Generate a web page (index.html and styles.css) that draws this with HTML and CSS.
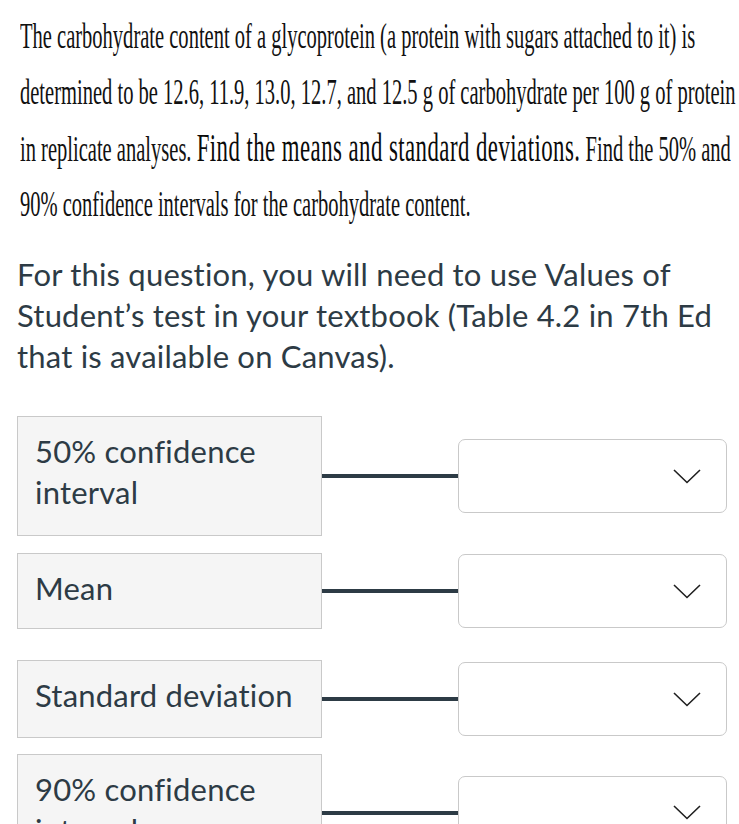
FILE: index.html
```html
<!DOCTYPE html>
<html>
<head>
<meta charset="utf-8">
<link rel="stylesheet" href="styles.css">
</head>
<body>
<div class="page">
  <div class="scan">
    <div class="sline"><span class="sq">The carbohydrate content of a glycoprotein (a protein with sugars attached to it) is</span></div>
    <div class="sline"><span class="sq">determined to be 12.6, 11.9, 13.0, 12.7, and 12.5 g of carbohydrate per 100 g of protein</span></div>
    <div class="sline"><span class="sq">in replicate analyses. <span class="big">Find the means and standard deviations.</span> Find the 50% and</span></div>
    <div class="sline"><span class="sq">90% confidence intervals for the carbohydrate content.</span></div>
  </div>
  <p class="note">For this question, you will need to use Values of Student’s test in your textbook (Table 4.2 in 7th Ed that is available on Canvas).</p>
  <div class="matches">
    <div class="row r1">
      <div class="label">50% confidence interval</div>
      <div class="wire"></div>
      <div class="select"><svg class="chev" viewBox="0 0 28 15" width="28" height="15"><polyline points="1,1 14,13.5 27,1" fill="none" stroke="#1f1f1f" stroke-width="1.6"/></svg></div>
    </div>
    <div class="row r2">
      <div class="label">Mean</div>
      <div class="wire"></div>
      <div class="select"><svg class="chev" viewBox="0 0 28 15" width="28" height="15"><polyline points="1,1 14,13.5 27,1" fill="none" stroke="#1f1f1f" stroke-width="1.6"/></svg></div>
    </div>
    <div class="row r3">
      <div class="label">Standard deviation</div>
      <div class="wire"></div>
      <div class="select"><svg class="chev" viewBox="0 0 28 15" width="28" height="15"><polyline points="1,1 14,13.5 27,1" fill="none" stroke="#1f1f1f" stroke-width="1.6"/></svg></div>
    </div>
    <div class="row r4">
      <div class="label">90% confidence interval</div>
      <div class="wire"></div>
      <div class="select"><svg class="chev" viewBox="0 0 28 15" width="28" height="15"><polyline points="1,1 14,13.5 27,1" fill="none" stroke="#1f1f1f" stroke-width="1.6"/></svg></div>
    </div>
  </div>
</div>
</body>
</html>
```
FILE: styles.css
```css
html, body {
  margin: 0;
  padding: 0;
  background: #ffffff;
  overflow: hidden;
}
.page {
  width: 739px;
  height: 824px;
  overflow: hidden;
}
.scan {
  padding: 8px 0 0 20px;
  height: 232px;
  box-sizing: border-box;
  font-family: "Liberation Serif", "Times New Roman", serif;
  color: #111111;
}
.sline {
  height: 56px;
  line-height: 56px;
  white-space: nowrap;
}
.sq {
  display: inline-block;
  font-size: 36px;
  transform-origin: 0 50%;
  transform: scaleX(0.57);
}
.sq .big {
  font-size: 40px;
  letter-spacing: 0.8px;
  color: #0a0a0a;
}
.note {
  margin: 22px 0 0 0;
  padding: 0 12px 0 17px;
  font-family: Lato, "Open Sans", sans-serif;
  font-size: 31px;
  letter-spacing: 0.2px;
  line-height: 41px;
  color: #2d3b45;
}
.matches {
  padding-left: 17px;
  margin-top: 39px;
  font-family: Lato, "Open Sans", sans-serif;
  font-size: 31px;
  letter-spacing: 0.2px;
  line-height: 41px;
  color: #2d3b45;
}
.row {
  display: flex;
  align-items: center;
}
.r2 { margin-top: 17px; }
.r3 { margin-top: 31px; }
.r4 { margin-top: 16px; }
.label {
  width: 305px;
  box-sizing: border-box;
  background: #f5f5f5;
  border: 1.5px solid #c9c9c9;
  padding: 14px 8px 19px 17px;
}
.r1 .label { padding-bottom: 22px; }
.r3 .label { padding-bottom: 21px; }
.wire {
  width: 136px;
  height: 4px;
  background: #2d3b45;
}
.select {
  width: 269px;
  height: 74px;
  box-sizing: border-box;
  border: 1.5px solid #c9c9c9;
  border-radius: 7px;
  background: #fff;
  display: flex;
  align-items: center;
  justify-content: flex-end;
  padding-right: 25px;
}
.chev {
  display: block;
}
```
